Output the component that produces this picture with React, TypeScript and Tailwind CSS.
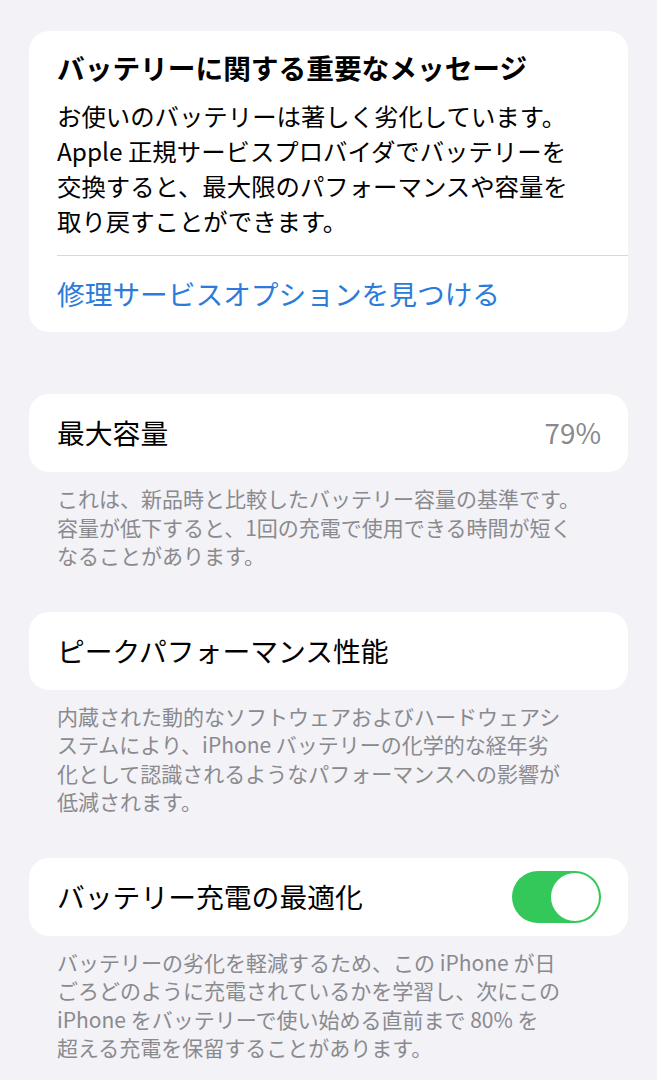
import React from "react";

const font = "font-['Noto_Sans_CJK_JP','Noto_Sans',sans-serif]";

const Footer = ({ lines }: { lines: string[] }) => (
    <p className="mt-[12px] px-[28px] text-[21px] leading-[28.5px] text-[#8a8a8e] whitespace-nowrap">
        {lines.map((l, i) => (
            <span key={i} className="block">
                {l}
            </span>
        ))}
    </p>
);

const Row = ({ children }: { children: React.ReactNode }) => (
    <div className="flex h-[78px] items-center justify-between rounded-[20px] bg-white pl-[28px] pr-[27px]">
        {children}
    </div>
);

const Toggle = () => (
    <div className="flex h-[52px] w-[89px] items-center justify-end rounded-full bg-[#34c759] p-[2px]">
        <div className="h-[48px] w-[48px] rounded-full bg-white" />
    </div>
);

const App = () => {
    return (
        <div className={`${font} min-h-[1080px] bg-[#f2f2f7] px-[29px] pt-[31px] text-black`}>
            {/* message card */}
            <div className="rounded-[20px] bg-white pt-[19px] pb-[21px]">
                <div className="px-[28px]">
                    <h1 className="text-[27.7px] font-bold leading-[35px] whitespace-nowrap">
                        バッテリーに関する重要なメッセージ
                    </h1>
                    <p className="mt-[13px] text-[24.4px] leading-[35px] whitespace-nowrap">
                        <span className="block">お使いのバッテリーは著しく劣化しています。</span>
                        <span className="block">Apple 正規サービスプロバイダでバッテリーを</span>
                        <span className="block">交換すると、最大限のパフォーマンスや容量を</span>
                        <span className="block">取り戻すことができます。</span>
                    </p>
                </div>
                <div className="ml-[28px] mt-[17px] h-px bg-[#d8d8dc]" />
                <div className="mt-[20px] px-[28px] text-[27.7px] leading-[35px] text-[#2b7bdc] whitespace-nowrap">
                    修理サービスオプションを見つける
                </div>
            </div>

            {/* max capacity */}
            <div className="mt-[62px]">
                <Row>
                    <span className="text-[27.8px]">最大容量</span>
                    <span className="text-[27.8px] text-[#8a8a8e]">79%</span>
                </Row>
                <Footer
                    lines={[
                        "これは、新品時と比較したバッテリー容量の基準です。",
                        "容量が低下すると、1回の充電で使用できる時間が短く",
                        "なることがあります。",
                    ]}
                />
            </div>

            {/* peak performance */}
            <div className="mt-[42px]">
                <Row>
                    <span className="text-[27.8px]">ピークパフォーマンス性能</span>
                </Row>
                <Footer
                    lines={[
                        "内蔵された動的なソフトウェアおよびハードウェアシ",
                        "ステムにより、iPhone バッテリーの化学的な経年劣",
                        "化として認識されるようなパフォーマンスへの影響が",
                        "低減されます。",
                    ]}
                />
            </div>

            {/* optimized charging */}
            <div className="mt-[42px]">
                <Row>
                    <span className="text-[27.8px]">バッテリー充電の最適化</span>
                    <Toggle />
                </Row>
                <Footer
                    lines={[
                        "バッテリーの劣化を軽減するため、この iPhone が日",
                        "ごろどのように充電されているかを学習し、次にこの",
                        "iPhone をバッテリーで使い始める直前まで 80% を",
                        "超える充電を保留することがあります。",
                    ]}
                />
            </div>
        </div>
    );
};

export default App;
